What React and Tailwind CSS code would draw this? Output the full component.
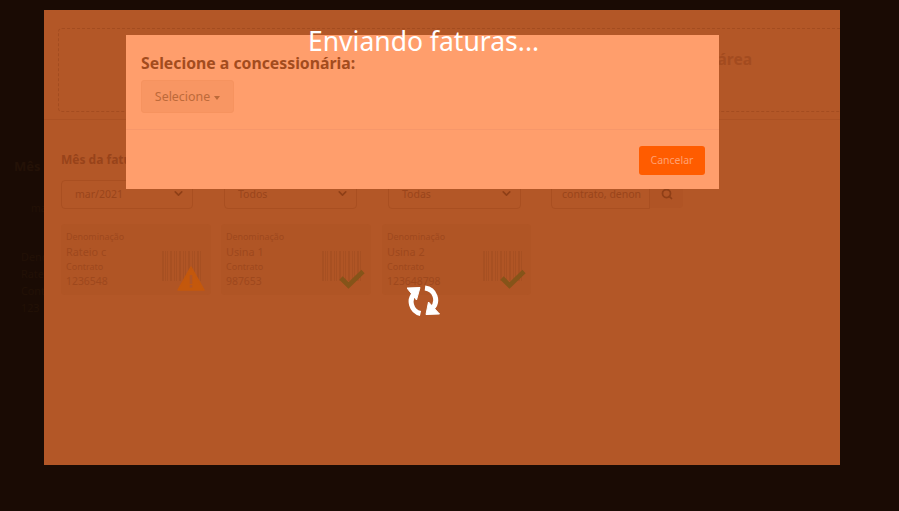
import React from "react";
import { ChevronDown, Search } from "lucide-react";

const font = { fontFamily: '"Noto Sans","Liberation Sans",sans-serif' };

function Barcode() {
  const xs = [0, 3, 5, 8, 12, 14, 17, 21, 23, 26, 30, 32, 35, 38];
  return (
    <svg width="40" height="30" className="absolute left-[101px] top-[27px] opacity-40">
      {xs.map((x, i) => (
        <rect key={i} x={x} y="0" width={i % 3 === 0 ? 2 : 1} height="30" fill="#9c4a20" />
      ))}
    </svg>
  );
}

function Card({ name, num, warn, cls }) {
  return (
    <div className={"relative h-[71px] rounded bg-[#b05525] pl-[5px] pt-[5px] text-[#9e481d] " + cls}>
      <div className="text-[8.9px] leading-[15px]">Denominação</div>
      <div className="text-[10.8px] leading-[15px]">{name}</div>
      <div className="text-[9px] leading-[15px]">Contrato</div>
      <div className="text-[10.4px] leading-[15px]">{num}</div>
      <Barcode />
      {warn ? (
        <svg width="28" height="25" viewBox="0 0 28 25" className="absolute left-[116px] top-[42px]">
          <path d="M14 1 L27 24 L1 24 Z" fill="#c4580c" stroke="#c4580c" strokeLinejoin="round" strokeWidth="1.5" />
          <rect x="12.7" y="9" width="2.6" height="9" fill="#b05525" />
          <rect x="12.7" y="19" width="2.6" height="2.6" fill="#b05525" />
        </svg>
      ) : (
        <svg width="26" height="20" viewBox="0 0 26 20" className="absolute left-[118px] top-[45px]">
          <path d="M2 9 L9.5 16.5 L24 2.5" fill="none" stroke="#855419" strokeWidth="4.6" />
        </svg>
      )}
    </div>
  );
}

function Sel({ label, cls }) {
  return (
    <div className={"relative flex h-[29px] items-center rounded-sm border border-[#a94f21] pl-[13px] text-[10.5px] text-[#9a451b] " + cls}>
      {label}
      <ChevronDown size={13} strokeWidth={3} className="absolute right-[7px] top-[6px] text-[#8f3f17]" />
    </div>
  );
}

function Spinner() {
  return (
    <svg width="33" height="32" viewBox="0 0 33 32" className="absolute left-[407px] top-[285px]">
      <path d="M8 8 A12 12 0 0 0 13.5 28.5" fill="none" stroke="#fff" strokeWidth="5" />
      <path d="M0 3 L13 2.5 L9.5 15 Z" fill="#fff" stroke="#fff" strokeWidth="1" strokeLinejoin="round" />
      <path d="M18 3 A12 12 0 0 1 25 23.5" fill="none" stroke="#fff" strokeWidth="5" />
      <path d="M32.5 29 L19 29.5 L21.5 17 Z" fill="#fff" stroke="#fff" strokeWidth="1" strokeLinejoin="round" />
    </svg>
  );
}

export default function App() {
  return (
    <div style={font} className="relative h-[511px] w-[899px] overflow-hidden bg-[#1a0b04]">
      <div className="absolute left-[14px] top-[157px] text-[13px] font-bold leading-[18px] text-[#241207]">Mês</div>
      <div className="absolute left-[31px] top-[200px] text-[10.5px] leading-[16px] text-[#221106]">mar</div>
      <div className="absolute left-[21px] top-[248px] text-[10.8px] leading-[17px] text-[#221106]">
        <div>Deno</div><div>Rate</div><div>Cont</div><div>123</div>
      </div>

      <div className="absolute left-[44px] top-[10px] h-[455px] w-[796px] overflow-hidden bg-[#b35727] pl-[14px] pt-[18px]">
        <div className="flex h-[84px] w-[800px] items-center justify-end rounded-sm border border-dashed border-[#a34c20] pr-[105px] pb-[20px] text-[15.5px] font-bold text-[#a34b1f]">
          área
        </div>
        <div className="-ml-[14px] mt-[7px] h-px w-[796px] bg-[#ab5123]" />
        <div className="pl-[3px] pt-[31px]">
          <div className="text-[12px] font-bold leading-[18px] text-[#98431a]">Mês da fatura</div>
          <div className="mt-[11px] flex">
            <Sel label="mar/2021" cls="w-[132px]" />
            <Sel label="Todos" cls="ml-[31px] w-[133px]" />
            <Sel label="Todas" cls="ml-[31px] w-[133px]" />
            <div className="ml-[30px] flex h-[29px] w-[99px] items-center overflow-hidden rounded-l-sm border border-[#a94f21] pl-[10px] text-[10.5px] whitespace-nowrap text-[#9a451b]">
              contrato, denon
            </div>
            <div className="flex h-[28px] w-[33px] items-center justify-center rounded-r-sm bg-[#b05425]">
              <Search size={12} strokeWidth={3.5} className="text-[#8f3f17]" />
            </div>
          </div>
          <div className="mt-[15px] flex">
            <Card name="Rateio c" num="1236548" warn cls="w-[150px]" />
            <Card name="Usina 1" num="987653" cls="ml-[10px] w-[150px]" />
            <Card name="Usina 2" num="123648798" cls="ml-[11px] w-[149px]" />
          </div>
        </div>
      </div>

      <div className="absolute left-[126px] top-[35px] flex h-[154px] w-[593px] flex-col bg-[#ff9e6c]">
        <div className="h-[95px] border-b border-[#f7976a] pl-[15px] pt-[17px]">
          <div className="text-[15.8px] font-bold leading-[23px] text-[#a34c1e]">Selecione a concessionária:</div>
          <div className="mt-[5px] flex h-[33px] w-[93px] items-center justify-center gap-[4px] rounded-[3px] border border-[#f6935f] bg-[#f89663] pt-[2px] text-[12.4px] text-[#bd6a3a]">
            Selecione
            <span className="mt-[1px] h-0 w-0 border-x-[3.5px] border-t-[4px] border-x-transparent border-t-[#bd6a3a]" />
          </div>
        </div>
        <div className="flex flex-1 items-start justify-end pr-[14px] pt-[16px]">
          <div className="flex h-[29px] w-[66px] items-center justify-center rounded-[3px] bg-[#ff5c00] text-[10.5px] text-[#ffa071]">
            Cancelar
          </div>
        </div>
      </div>

      <div className="absolute left-[308px] top-[22px] text-[26.5px] leading-[38px] whitespace-nowrap text-white">Enviando faturas...</div>
      <Spinner />
    </div>
  );
}
